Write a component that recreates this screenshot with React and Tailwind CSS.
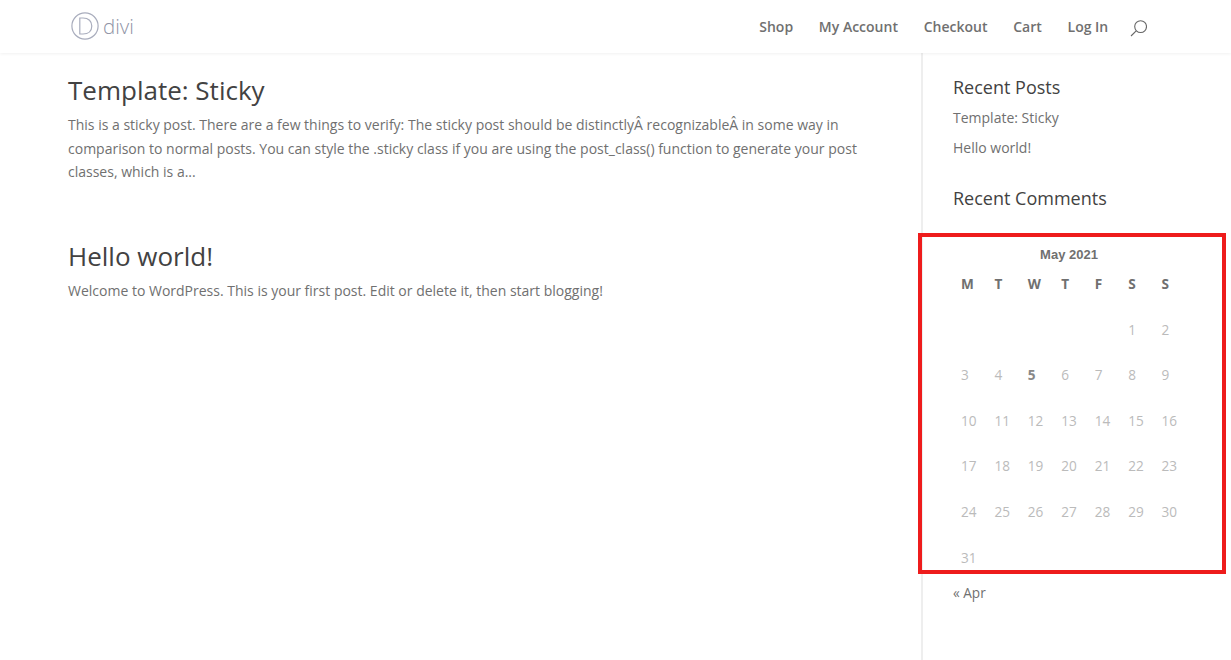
const nav = ["Shop", "My Account", "Checkout", "Cart", "Log In"];
const heads = ["M", "T", "W", "T", "F", "S", "S"];
const days = [
  "", "", "", "", "", "1", "2",
  "3", "4", "5", "6", "7", "8", "9",
  "10", "11", "12", "13", "14", "15", "16",
  "17", "18", "19", "20", "21", "22", "23",
  "24", "25", "26", "27", "28", "29", "30",
  "31", "", "", "", "", "", "",
];

export default function App() {
  return (
    <div className="relative h-[660px] overflow-hidden bg-white font-['Open_Sans',sans-serif] text-[14px] text-[#707070]">
      <header className="relative z-10 flex h-[53px] items-center justify-between bg-white pl-[71px] pr-[84px] shadow-[0_1px_3px_rgba(0,0,0,0.06)]">
        <div className="flex items-center gap-[4px] pb-[1px]">
          <svg width="28" height="28" viewBox="0 0 28 28" fill="none" stroke="#a9adbd" strokeWidth="1.2">
            <circle cx="14" cy="14" r="13.1" />
            <path d="M8.8 6h3.2c5.6 0 8.8 3.2 8.8 8s-3.2 8-8.8 8H8.8z" />
          </svg>
          <span className="text-[20.5px] font-light leading-none text-[#9094a6]">divi</span>
        </div>
        <nav className="flex items-center gap-[25.75px] text-[14px] font-semibold text-[#707070]">
          {nav.map((n) => (
            <span key={n}>{n}</span>
          ))}
          <svg width="17" height="17" viewBox="0 0 17 17" fill="none" stroke="#666" strokeWidth="1.1" className="mt-[3px] -ml-[4px]">
            <circle cx="10.6" cy="6.6" r="5.9" />
            <path d="M6.2 10.8 1 16" />
          </svg>
        </nav>
      </header>

      <div className="flex h-[607px]">
        <main className="w-[921px] shrink-0 pl-[68px] pr-[53px] pt-[20px]">
          <article className="pb-[54px]">
            <h2 className="mb-[6px] text-[26px] font-normal leading-[34px] text-[#424242]">Template: Sticky</h2>
            <p className="leading-[23.6px]">
              This is a sticky post. There are a few things to verify: The sticky post should be distinctlyÂ recognizableÂ in some way in comparison to normal posts. You can style the .sticky class if you are using the post_class() function to generate your post classes, which is a...
            </p>
          </article>
          <article>
            <h2 className="mb-[5px] text-[26px] font-normal leading-[36px] text-[#424242]">Hello world!</h2>
            <p className="leading-[23.8px]">
              Welcome to WordPress. This is your first post. Edit or delete it, then start blogging!
            </p>
          </article>
        </main>

        <aside className="flex-1 border-l-2 border-[#eee] pl-[30px] pt-[20px]">
          <h4 className="text-[18px] font-normal leading-[28px] text-[#424242]">Recent Posts</h4>
          <p className="mt-[5px] leading-[24px]">Template: Sticky</p>
          <p className="mt-[6px] leading-[24px]">Hello world!</p>
          <h4 className="mt-[24px] text-[18px] font-normal leading-[28px] text-[#424242]">Recent Comments</h4>
          <div className="ml-[8px] mt-[33px] w-[234px]">
            <div className="w-[216px] text-center font-['Liberation_Sans',sans-serif] text-[13px] font-bold leading-[20px]">May 2021</div>
            <div className="grid grid-cols-7">
              {heads.map((h, i) => (
                <div key={i} className="flex h-[39px] items-center text-[13.6px] font-bold">{h}</div>
              ))}
            </div>
            <div className="mt-[3px] grid grid-cols-7">
              {days.map((d, i) => (
                <div key={i} className={`flex h-[45.6px] items-center text-[13.6px] ${d === "5" ? "font-bold text-[#888]" : "font-normal text-[#bbb]"}`}>
                  {d}
                </div>
              ))}
            </div>
          </div>
          <p className="mt-[2px] text-[13.6px] leading-[20px]">« Apr</p>
        </aside>
      </div>

      <div className="pointer-events-none absolute left-[918px] top-[233px] z-20 h-[341px] w-[308px] border-4 border-[#ee1c1c]" />
    </div>
  );
}
